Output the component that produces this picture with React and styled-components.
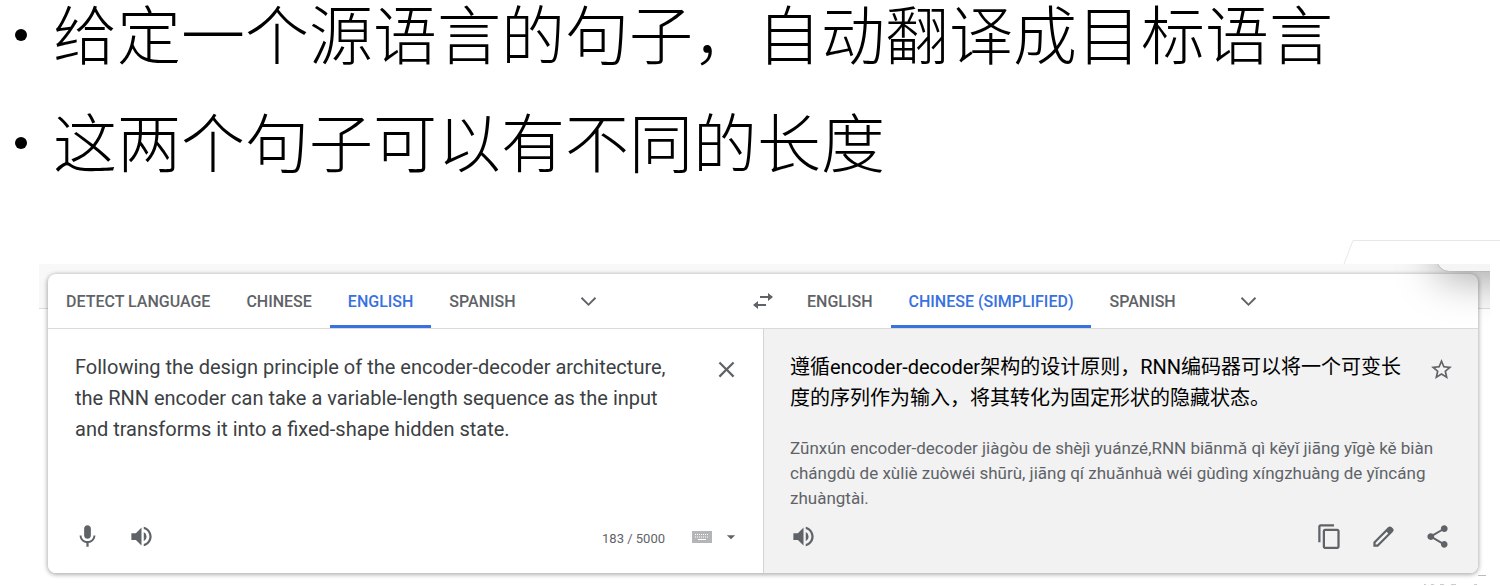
import React, { useState } from 'react';
import styled, { createGlobalStyle } from 'styled-components';

const GlobalStyle = createGlobalStyle`
  *,
  *::before,
  *::after {
    box-sizing: border-box;
  }

  body {
    margin: 0;
    background: #fff;
    font-family: Roboto, 'Noto Sans CJK SC', sans-serif;
  }

  button {
    border: 0;
    padding: 0;
    background: none;
    font: inherit;
    color: #5f6368;
    cursor: pointer;
  }
`;

const Slide = styled.main`
  position: relative;
  display: flex;
  flex-direction: column;
  gap: 94px;
`;

const Points = styled.ul`
  list-style: none;
  margin: 0;
  padding: 0 15px;
  display: flex;
  flex-direction: column;
  gap: 46px;
`;

const Point = styled.li`
  display: flex;
  align-items: center;
  gap: 26px;
  font-family: 'Noto Sans CJK SC', sans-serif;
  font-size: 64px;
  font-weight: 300;
  line-height: 62px;
  white-space: nowrap;
  color: #000;

  &::before {
    content: '';
    flex: none;
    width: 12px;
    height: 12px;
    margin-top: 8px;
    border-radius: 50%;
    background: #000;
  }
`;

const Screen = styled.section`
  position: relative;
  margin: 0 10px 0 39px;
  padding: 10px 12px 12px 9px;
  overflow: hidden;
  background: linear-gradient(#f8f8f8 44px, #dadce0 44px, #dadce0 45px, #fff 45px);
`;

const Card = styled.div`
  border-radius: 8px;
  overflow: hidden;
  background: #fff;
  box-shadow: 0 1px 4px 1px rgba(0, 0, 0, 0.3);
`;

const LanguageBar = styled.div`
  display: grid;
  grid-template-columns: 1fr 52px 1fr;
  height: 55px;
  border-bottom: 1px solid #dadada;
`;

const Tabs = styled.div`
  display: flex;
`;

const Tab = styled.button`
  && {
    padding: 3px 18px 0;
    border-bottom: 3px solid ${(props) => (props.$active ? '#3871e0' : 'transparent')};
    color: ${(props) => (props.$active ? '#3871e0' : '#5f6368')};
  }
  font-size: 16px;
  font-weight: 500;
  white-space: nowrap;
`;

const IconButton = styled.button`
  display: flex;
  align-items: center;
  justify-content: center;
  flex: none;
  width: ${(props) => props.$width || 27}px;

  svg {
    display: block;
    fill: currentColor;
  }
`;

const MoreButton = styled(IconButton)`
  margin-left: 41px;
`;

const Panes = styled.div`
  display: grid;
  grid-template-columns: 1fr 1fr;
  height: 244px;
`;

const Pane = styled.section`
  display: flex;
  flex-direction: column;
  justify-content: space-between;
  padding: 23px 27px 23px 26px;
  background: ${(props) => (props.$result ? '#f2f2f2' : '#fff')};
  border-left: ${(props) => (props.$result ? '1px solid #d4d4d4' : '0')};
`;

const TextRow = styled.div`
  display: flex;
  align-items: flex-start;
  justify-content: space-between;
  gap: 24px;
  margin-right: -4px;

  > button {
    height: 34px;
  }
`;

const SourceText = styled.textarea`
  flex: 1;
  height: 124px;
  padding: 0 0 0 1px;
  border: 0;
  outline: 0;
  resize: none;
  background: none;
  font: 400 20px/31px Roboto, sans-serif;
  color: #3c4043;
`;

const Translation = styled.p`
  margin: 0;
  font-size: 20px;
  line-height: 31px;
  color: #000;
`;

const Pinyin = styled.p`
  margin: 22px 0 0;
  font-family: Roboto, 'Noto Sans', sans-serif;
  font-size: 17px;
  line-height: 25px;
  color: #5f6368;
`;

const Footer = styled.div`
  display: flex;
  align-items: center;
  height: 27px;
  gap: 27px;
`;

const Counter = styled.span`
  margin-left: auto;
  padding-top: 3px;
  font-size: 13px;
  color: #5f6368;
`;

const InputTools = styled.div`
  display: flex;
  align-items: center;
  gap: 10px;
  margin-right: -4px;
`;

const Spacer = styled.span`
  flex: 1;
`;

const Popup = styled.div`
  position: absolute;
  top: -40px;
  right: -60px;
  width: 113px;
  height: 47px;
  border-radius: 12px;
  background: #f5f5f5;
  box-shadow: 0 0 1px rgba(0, 0, 0, 0.5), 0 8px 40px rgba(0, 0, 0, 0.34);
`;

const Outline = styled.svg`
  position: absolute;
  top: 240px;
  right: 0;
`;

const Specks = styled.svg`
  position: absolute;
  right: 14px;
  bottom: 0;
`;

const Icon = ({ path, size = 27 }) => (
  <svg width={size} height={size} viewBox="0 0 24 24" aria-hidden="true">
    <path d={path} />
  </svg>
);

const icons = {
  more: 'M5.4 7.4 12 14l6.6-6.6L20 8.8l-8 8-8-8z',
  swap: 'M17 4l5 4-5 4V9H9V7h8zM7 12v3h8v2H7v3l-5-4z',
  close: 'M19 6.41 17.59 5 12 10.59 6.41 5 5 6.41 10.59 12 5 17.59 6.41 19 12 13.41 17.59 19 19 17.59 13.41 12z',
  mic: 'M12 14c1.66 0 2.99-1.34 2.99-3L15 5c0-1.66-1.34-3-3-3S9 3.34 9 5v6c0 1.66 1.34 3 3 3zm5.3-3c0 3-2.54 5.1-5.3 5.1S6.7 14 6.7 11H5c0 3.41 2.72 6.23 6 6.72V21h2v-3.28c3.28-.48 6-3.3 6-6.72h-1.7z',
  volume:
    'M3 9v6h4l5 5V4L7 9H3zm13.5 3A4.5 4.5 0 0 0 14 7.97v8.05c1.48-.73 2.5-2.25 2.5-4.02zM14 3.23v2.06c2.89.86 5 3.54 5 6.71s-2.11 5.85-5 6.71v2.06c4.01-.91 7-4.49 7-8.77s-2.99-7.86-7-8.77z',
  star: 'M22 9.24l-7.19-.62L12 2 9.19 8.63 2 9.24l5.46 4.73L5.82 21 12 17.27 18.18 21l-1.63-7.03L22 9.24zM12 15.4l-3.76 2.27 1-4.28-3.32-2.88 4.38-.38L12 6.1l1.71 4.04 4.38.38-3.32 2.88 1 4.28L12 15.4z',
  copy: 'M16 1H4c-1.1 0-2 .9-2 2v14h2V3h12V1zm3 4H8c-1.1 0-2 .9-2 2v14c0 1.1.9 2 2 2h11c1.1 0 2-.9 2-2V7c0-1.1-.9-2-2-2zm0 16H8V7h11v14z',
  edit: 'M20.41 4.94l-1.35-1.35c-.78-.78-2.05-.78-2.83 0L3 16.82V21h4.18L20.41 7.77c.79-.78.79-2.05 0-2.83zm-14 14.12L5 19v-1.36l9.82-9.82 1.41 1.41-9.82 9.83z',
  share:
    'M18 16.08c-.76 0-1.44.3-1.96.77L8.91 12.7c.05-.23.09-.46.09-.7s-.04-.47-.09-.7l7.05-4.11c.54.5 1.25.81 2.04.81 1.66 0 3-1.34 3-3s-1.34-3-3-3-3 1.34-3 3c0 .24.04.47.09.7L8.04 9.81C7.5 9.31 6.79 9 6 9c-1.66 0-3 1.34-3 3s1.34 3 3 3c.79 0 1.5-.31 2.04-.81l7.12 4.16c-.05.21-.08.43-.08.65 0 1.61 1.31 2.92 2.92 2.92s2.92-1.31 2.92-2.92-1.31-2.92-2.92-2.92z',
  caret: 'M6.5 9.5l5.5 5.5 5.5-5.5z',
};

const KeyboardIcon = () => (
  <svg width="20" height="12" viewBox="0 0 20 12" aria-hidden="true">
    <rect width="20" height="12" fill="#b4b5b7" />
    <path d="M3 3.5h14M3 6h14" stroke="#fff" strokeWidth="1" strokeDasharray="1 1" />
    <path d="M6 8.5h8" stroke="#fff" strokeWidth="1" />
  </svg>
);

const LanguageTabs = ({ languages, selected, onSelect }) => (
  <Tabs role="tablist">
    {languages.map((language) => (
      <Tab
        key={language}
        role="tab"
        aria-selected={language === selected}
        $active={language === selected}
        onClick={() => onSelect(language)}
      >
        {language}
      </Tab>
    ))}
    <MoreButton aria-label="More languages">
      <Icon path={icons.more} size={23} />
    </MoreButton>
  </Tabs>
);

const App = () => {
  const [from, setFrom] = useState('ENGLISH');
  const [to, setTo] = useState('CHINESE (SIMPLIFIED)');
  const [text, setText] = useState(
    'Following the design principle of the encoder-decoder architecture, the RNN encoder can take a variable-length sequence as the input and transforms it into a fixed-shape hidden state.'
  );

  return (
    <>
      <GlobalStyle />
      <Slide>
        <Points>
          <Point>给定一个源语言的句子，自动翻译成目标语言</Point>
          <Point>这两个句子可以有不同的长度</Point>
        </Points>
        <Screen>
          <Card>
            <LanguageBar>
              <LanguageTabs
                languages={['DETECT LANGUAGE', 'CHINESE', 'ENGLISH', 'SPANISH']}
                selected={from}
                onSelect={setFrom}
              />
              <IconButton $width={52} aria-label="Swap languages">
                <Icon path={icons.swap} size={24} />
              </IconButton>
              <LanguageTabs
                languages={['ENGLISH', 'CHINESE (SIMPLIFIED)', 'SPANISH']}
                selected={to}
                onSelect={setTo}
              />
            </LanguageBar>
            <Panes>
              <Pane>
                <TextRow>
                  <SourceText
                    aria-label="Source text"
                    spellCheck={false}
                    value={text}
                    onChange={(e) => setText(e.target.value)}
                  />
                  <IconButton aria-label="Clear text">
                    <Icon path={icons.close} />
                  </IconButton>
                </TextRow>
                <Footer>
                  <IconButton aria-label="Translate by voice">
                    <Icon path={icons.mic} />
                  </IconButton>
                  <IconButton aria-label="Listen">
                    <Icon path={icons.volume} />
                  </IconButton>
                  <Counter>{text.length} / 5000</Counter>
                  <InputTools>
                    <IconButton $width={20} aria-label="Keyboard">
                      <KeyboardIcon />
                    </IconButton>
                    <IconButton $width={18} aria-label="Input tools">
                      <Icon path={icons.caret} size={18} />
                    </IconButton>
                  </InputTools>
                </Footer>
              </Pane>
              <Pane $result>
                <div>
                  <TextRow>
                    <Translation lang="zh-CN">
                      遵循encoder-decoder架构的设计原则，RNN编码器可以将一个可变长度的序列作为输入，将其转化为固定形状的隐藏状态。
                    </Translation>
                    <IconButton aria-label="Save translation">
                      <Icon path={icons.star} size={25} />
                    </IconButton>
                  </TextRow>
                  <Pinyin>
                    Zūnxún encoder-decoder jiàgòu de shèjì yuánzé,RNN biānmǎ qì kěyǐ jiāng yīgè kě biàn
                    chángdù de xùliè zuòwéi shūrù, jiāng qí zhuǎnhuà wéi gùdìng xíngzhuàng de yǐncáng
                    zhuàngtài.
                  </Pinyin>
                </div>
                <Footer>
                  <IconButton aria-label="Listen">
                    <Icon path={icons.volume} />
                  </IconButton>
                  <Spacer />
                  <IconButton aria-label="Copy translation">
                    <Icon path={icons.copy} />
                  </IconButton>
                  <IconButton aria-label="Suggest an edit">
                    <Icon path={icons.edit} />
                  </IconButton>
                  <IconButton aria-label="Share translation">
                    <Icon path={icons.share} />
                  </IconButton>
                </Footer>
              </Pane>
            </Panes>
          </Card>
          <Popup />
        </Screen>
        <Outline width="157" height="24" viewBox="0 0 157 24" aria-hidden="true">
          <path d="M1 24 10 .5H157" fill="none" stroke="#e8e8e8" />
        </Outline>
        <Specks width="64" height="11" viewBox="0 0 64 11" aria-hidden="true">
          <path d="M56 1.5h8" stroke="#bbb" />
          <path d="M2 10.5h2M9 10.5h3M18 10.5h4M29 10.5h5M52 10.5h3" stroke="#ccc" />
        </Specks>
      </Slide>
    </>
  );
};

export default App;
